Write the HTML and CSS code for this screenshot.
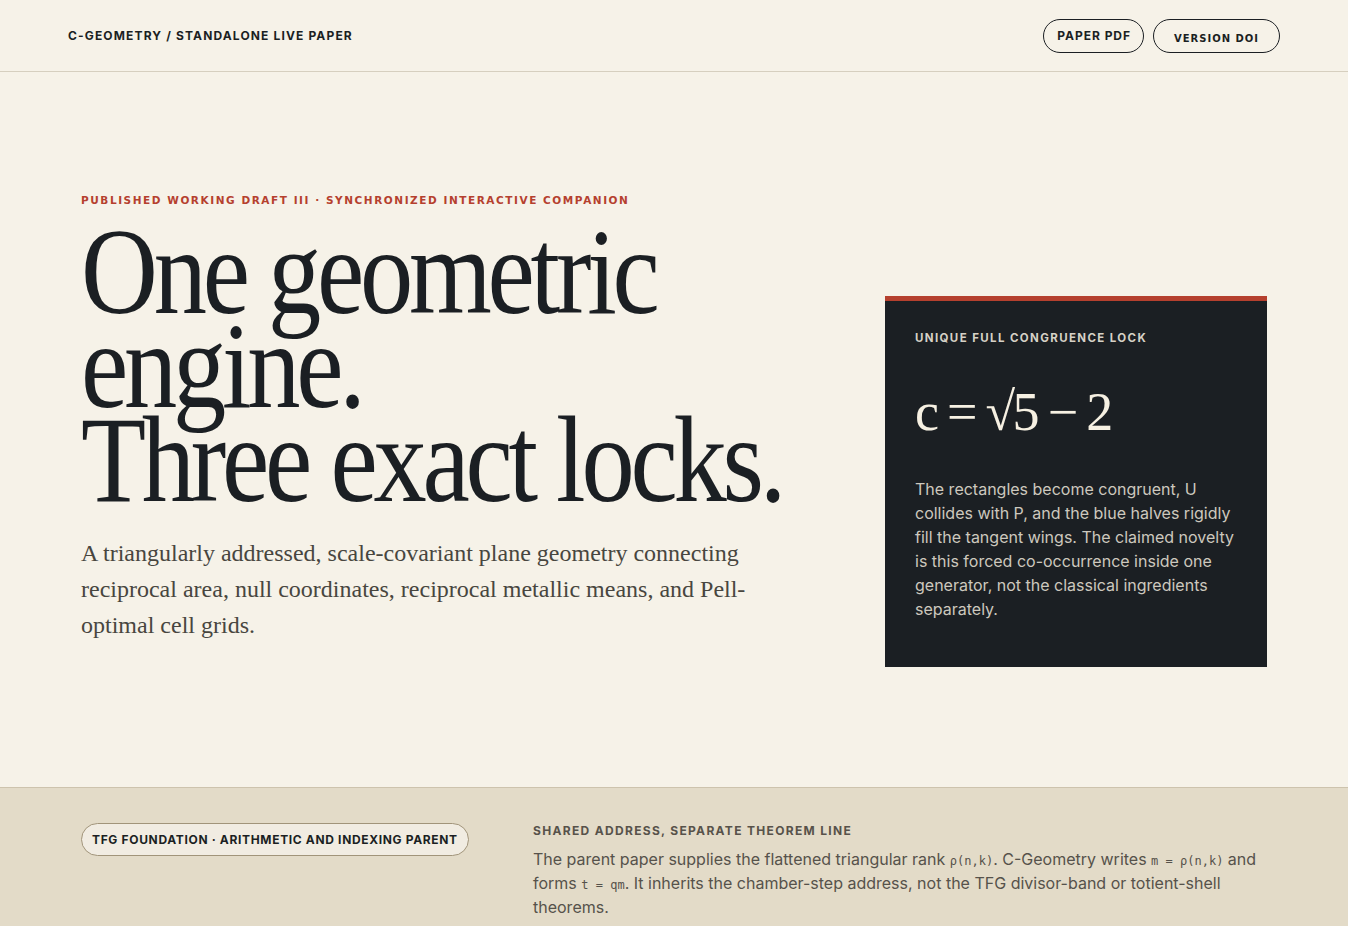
FILE: index.html
```html
<!DOCTYPE html>
<html lang="en">
<head>
    <meta charset="UTF-8">
    <meta name="viewport" content="width=device-width, initial-scale=1.0">
    <title>C-Geometry / Standalone Live Paper</title>
    <link rel="stylesheet" href="styles.css">
</head>
<body>
    <header class="topbar">
        <div class="brand">C-Geometry / Standalone Live Paper</div>
        <nav class="top-links">
            <a class="pill-link" href="#">Paper PDF</a>
            <button class="pill-button" type="button">Version DOI</button>
        </nav>
    </header>

    <main>
        <section class="hero">
            <div class="hero-copy">
                <p class="eyebrow">Published working draft III · Synchronized interactive companion</p>
                <h1>One geometric engine.<br>Three exact locks.</h1>
                <p class="lede">A triangularly addressed, scale-covariant plane geometry connecting reciprocal area, null coordinates, reciprocal metallic means, and Pell-optimal cell grids.</p>
            </div>

            <aside class="lock-card">
                <div class="lock-label">Unique full congruence lock</div>
                <div class="lock-formula">c = √5 − 2</div>
                <p>The rectangles become congruent, U collides with P, and the blue halves rigidly fill the tangent wings. The claimed novelty is this forced co-occurrence inside one generator, not the classical ingredients separately.</p>
            </aside>
        </section>

        <section class="parent-band">
            <div class="band-inner">
                <div>
                    <span class="parent-tag">TFG Foundation · Arithmetic and indexing parent</span>
                </div>
                <div class="band-text">
                    <h2>Shared address, separate theorem line</h2>
                    <p>The parent paper supplies the flattened triangular rank <code>ρ(n,k)</code>. C-Geometry writes <code>m = ρ(n,k)</code> and forms <code>t = qm</code>. It inherits the chamber-step address, not the TFG divisor-band or totient-shell theorems.</p>
                </div>
            </div>
        </section>
    </main>
</body>
</html>
```

FILE: styles.css
```css
body {
    margin: 0;
    background: #f6f2e8;
    color: #1b1f23;
    font-family: 'Inter', 'Liberation Sans', sans-serif;
}

/* top bar */
.topbar {
    display: flex;
    align-items: center;
    justify-content: space-between;
    height: 71px;
    padding: 0 68px;
    border-bottom: 1px solid #d6cfbf;
}

.brand {
    font-size: 12px;
    font-weight: 700;
    letter-spacing: 0.095em;
    text-transform: uppercase;
}

.top-links {
    display: flex;
    gap: 9px;
    align-items: center;
}

.pill-link,
.pill-button {
    display: inline-block;
    box-sizing: border-box;
    height: 34px;
    border: 1px solid #1b1f23;
    border-radius: 999px;
    background: transparent;
    color: #1b1f23;
    font-weight: 700;
    text-transform: uppercase;
    text-decoration: none;
}

.pill-link {
    padding: 0 12px 0 13px;
    line-height: 31px;
    font-size: 12px;
    letter-spacing: 0.08em;
}

.pill-button {
    width: 127px;
    padding: 4px 0 0;
    font-family: 'DejaVu Sans', sans-serif;
    font-size: 10px;
    letter-spacing: 0.1em;
    margin-top: 1px;
}

/* hero */
.hero {
    display: grid;
    grid-template-columns: minmax(0, 1fr) 382px;
    gap: 40px;
    max-width: 1186px;
    margin: 0 auto;
    padding: 120px 0;
}

.eyebrow {
    margin: 0 0 17px;
    color: #b5402e;
    font-family: 'DejaVu Sans', sans-serif;
    font-size: 10.5px;
    font-weight: 700;
    letter-spacing: 0.148em;
    line-height: 16px;
    text-transform: uppercase;
}

/* the display face is set narrow: the serif is squeezed horizontally */
h1 {
    width: 820px;
    margin: 0;
    font-family: 'Liberation Serif', serif;
    font-weight: 400;
    font-size: 122px;
    line-height: 94px;
    letter-spacing: -0.04em;
    transform: scaleX(0.873);
    transform-origin: left top;
}

.lede {
    max-width: 680px;
    margin: 28px 0 0;
    color: #48463f;
    font-family: 'Liberation Serif', serif;
    font-size: 24px;
    line-height: 36px;
}

/* dark lock card */
.lock-card {
    align-self: start;
    margin-top: 104px;
    padding: 29px 30px 46px;
    background: #1b1f23;
    border-top: 5px solid #b5402e;
    color: #cdc8be;
}

.lock-label {
    color: #d6d1c6;
    font-size: 11.5px;
    font-weight: 700;
    letter-spacing: 0.12em;
    line-height: 16px;
    text-transform: uppercase;
}

.lock-formula {
    margin: 36px 0 35px;
    color: #f6f0e2;
    font-family: 'Liberation Serif', serif;
    font-size: 54px;
    line-height: 60px;
    letter-spacing: -0.05em;
}

.lock-card p {
    margin: 0;
    font-size: 16px;
    line-height: 24px;
}

/* parent paper band */
.parent-band {
    background: #e3dbc8;
    border-top: 1px solid #cdc3ad;
    padding: 35px 0 40px;
}

.band-inner {
    display: grid;
    grid-template-columns: 420px 1fr;
    gap: 32px;
    max-width: 1186px;
    margin: 0 auto;
}

.parent-tag {
    display: inline-block;
    padding: 0 10px;
    height: 31px;
    line-height: 31px;
    border: 1px solid #a1947a;
    border-radius: 999px;
    background: #f1ece2;
    font-size: 12px;
    font-weight: 700;
    letter-spacing: 0.055em;
    text-transform: uppercase;
}

.band-text h2 {
    margin: 0 0 8px;
    color: #57524a;
    font-size: 12px;
    font-weight: 700;
    letter-spacing: 0.11em;
    line-height: 16px;
    text-transform: uppercase;
}

.band-text p {
    margin: 0;
    color: #56524b;
    font-size: 16px;
    line-height: 24px;
}

code {
    font-family: 'DejaVu Sans Mono', monospace;
    font-size: 12px;
    line-height: 1;
}
```
